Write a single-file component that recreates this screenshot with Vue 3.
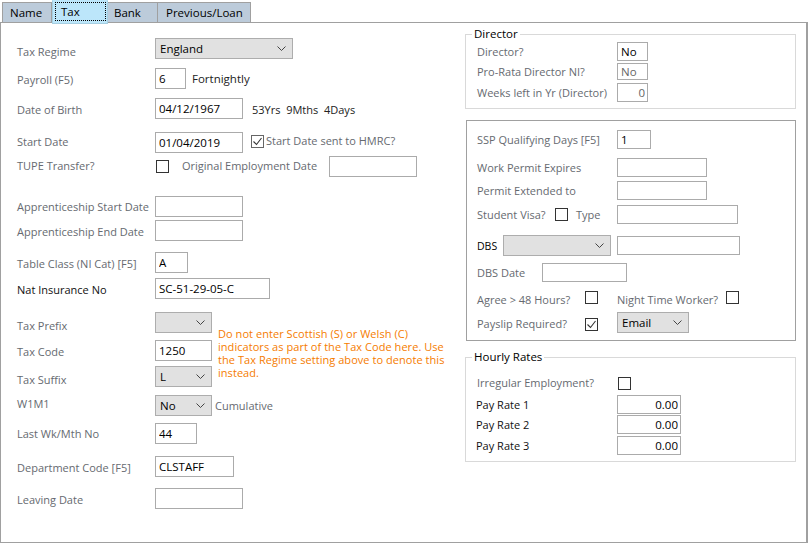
<script setup>
const tabs = [
  { name: 'Name', active: false },
  { name: 'Tax', active: true },
  { name: 'Bank', active: false },
  { name: 'Previous/Loan', active: false }
]
</script>

<template>
  <div class="screen">
    <div class="tabs">
      <div v-for="t in tabs" :key="t.name" class="tab" :class="[{ active: t.active }, 'tab-' + t.name.slice(0, 3)]">
        <span class="tab-text">{{ t.name }}</span>
      </div>
    </div>
    <div class="panel">
      <div class="left">
        <div class="row"><span class="lab low">Tax Regime</span>
          <div class="sel w138">England<svg class="chev" width="9" height="5" viewBox="0 0 9 5"><path d="M.5.5l4 4 4-4" /></svg></div>
        </div>
        <div class="row g9"><span class="lab mid">Payroll (F5)</span>
          <input class="w31" value="6" readonly /><span class="txt ml6">Fortnightly</span>
        </div>
        <div class="row g9"><span class="lab mid">Date of Birth</span>
          <input class="w88" value="04/12/1967" readonly /><span class="txt age">53Yrs&nbsp; 9Mths&nbsp; 4Days</span>
        </div>
        <div class="row g13"><span class="lab">Start Date</span>
          <input class="w88" value="01/04/2019" readonly />
          <span class="check on hmrc"><svg width="11" height="11" viewBox="0 0 11 11"><path d="M1.5 5.5l3 3 5-6.5" /></svg></span>
          <span class="lab2 hmrc-text">Start Date sent to HMRC?</span>
        </div>
        <div class="row g3"><span class="lab">TUPE Transfer?</span>
          <span class="check ml1"></span>
          <span class="lab2 orig">Original Employment Date</span>
          <input class="w88" readonly />
        </div>
        <div class="row g19"><span class="lab flat">Apprenticeship Start Date</span><input class="w88" readonly /></div>
        <div class="row g3"><span class="lab mid">Apprenticeship End Date</span><input class="w88" readonly /></div>
        <div class="row g11"><span class="lab mid">Table Class (NI Cat) [F5]</span><input class="w33" value="A" readonly /></div>
        <div class="row g5"><span class="lab mid dark">Nat Insurance No</span><input class="w115" value="SC-51-29-05-C" readonly /></div>

        <div class="tax-group g13">
          <div class="tax-rows">
            <div class="row"><span class="lab low">Tax Prefix</span>
              <div class="sel w57"><svg class="chev" width="9" height="5" viewBox="0 0 9 5"><path d="M.5.5l4 4 4-4" /></svg></div>
            </div>
            <div class="row g7"><span class="lab mid">Tax Code</span><input class="w57" value="1250" readonly /></div>
            <div class="row g5"><span class="lab low">Tax Suffix</span>
              <div class="sel w57">L<svg class="chev" width="9" height="5" viewBox="0 0 9 5"><path d="M.5.5l4 4 4-4" /></svg></div>
            </div>
          </div>
          <p class="note">Do not enter Scottish (S) or Welsh (C) indicators as part of the Tax Code here. Use the Tax Regime setting above to denote this instead.</p>
        </div>

        <div class="row g8"><span class="lab high">W1M1</span>
          <div class="sel w57">No<svg class="chev" width="9" height="5" viewBox="0 0 9 5"><path d="M.5.5l4 4 4-4" /></svg></div>
          <span class="lab2 ml3">Cumulative</span>
        </div>
        <div class="row g7"><span class="lab flat">Last Wk/Mth No</span><input class="w42" value="44" readonly /></div>
        <div class="row g12"><span class="lab mid">Department Code [F5]</span><input class="w79" value="CLSTAFF" readonly /></div>
        <div class="row g11"><span class="lab mid">Leaving Date</span><input class="w88" readonly /></div>
      </div>

      <div class="right">
        <fieldset class="group">
          <legend>Director</legend>
          <div class="row small"><span class="rlab">Director?</span><input class="w31" value="No" readonly /></div>
          <div class="row short g2"><span class="rlab">Pro-Rata Director NI?</span><input class="w31 muted" value="No" readonly /></div>
          <div class="row small g3"><span class="rlab">Weeks left in Yr (Director)</span><input class="w31 num muted" value="0" readonly /></div>
        </fieldset>

        <div class="box">
          <div class="row small"><span class="rlab">SSP Qualifying Days [F5]</span><input class="w34" value="1" readonly /></div>
          <div class="row small g9"><span class="rlab">Work Permit Expires</span><input class="w90" readonly /></div>
          <div class="row small g4"><span class="rlab">Permit Extended to</span><input class="w90" readonly /></div>
          <div class="row small g5">
            <span class="rlab visa">Student Visa?</span><span class="check"></span>
            <span class="lab2 type">Type</span><input class="w121" readonly />
          </div>
          <div class="row g11">
            <span class="dbs">DBS</span>
            <div class="sel w108"><svg class="chev" width="9" height="5" viewBox="0 0 9 5"><path d="M.5.5l4 4 4-4" /></svg></div>
            <input class="w123 ml6 small-h" readonly />
          </div>
          <div class="row small g7"><span class="rlab dbsdate">DBS Date</span><input class="w85" readonly /></div>
          <div class="row tick g7">
            <span class="rlab wide drop">Agree &gt; 48 Hours?</span><span class="check"></span>
            <span class="lab2 night drop">Night Time Worker?</span><span class="check"></span>
          </div>
          <div class="row g7">
            <span class="rlab wide payslip">Payslip Required?</span>
            <span class="check on payslip-check"><svg width="11" height="11" viewBox="0 0 11 11"><path d="M1.5 5.5l3 3 5-6.5" /></svg></span>
            <div class="sel w72 email">Email<svg class="chev" width="9" height="5" viewBox="0 0 9 5"><path d="M.5.5l4 4 4-4" /></svg></div>
          </div>
        </div>

        <fieldset class="group hourly">
          <legend>Hourly Rates</legend>
          <div class="row tick"><span class="rlab irregular">Irregular Employment?</span><span class="check ml1"></span></div>
          <div class="row small g4"><span class="rlab dark">Pay Rate 1</span><input class="w64 num" value="0.00" readonly /></div>
          <div class="row small g1"><span class="rlab dark">Pay Rate 2</span><input class="w64 num" value="0.00" readonly /></div>
          <div class="row small g2"><span class="rlab dark">Pay Rate 3</span><input class="w64 num" value="0.00" readonly /></div>
        </fieldset>
      </div>
    </div>
  </div>
</template>

<style>
html, body { margin: 0; background: #fff; }
</style>

<style scoped>
.screen {
  width: 808px;
  height: 543px;
  overflow: hidden;
  background: #fff;
  font-family: "Open Sans", "Noto Sans", sans-serif;
  font-size: 11px;
  color: #000;
  display: flex;
  flex-direction: column;
}
.tabs {
  display: flex;
  height: 22px;
  padding-left: 2px;
  align-items: flex-end;
}
.tab {
  height: 20px;
  box-sizing: border-box;
  background: #bccbda;
  border: 1px solid #a0a0a0;
  border-bottom: 0;
  border-left: 0;
  padding-left: 7px;
  line-height: 19px;
  font-size: 11.5px;
}
.tab:first-child { border-left: 1px solid #a0a0a0; }
.tab-Nam { width: 50px; }
.tab-Tax { width: 56px; }
.tab-Ban { width: 50px; padding-left: 6px; }
.tab-Pre { width: 93px; padding-left: 8px; }
.tab.active {
  height: 24px;
  margin-bottom: -2px;
  background: #bce6fa;
  border: 1px solid #a6cfe2;
  border-top-color: #bce6fa;
  border-bottom: 1px solid #a6cfe2;
  padding: 2px 2px 3px 3px;
  line-height: 17px;
  position: relative;
  z-index: 1;
}
.tab.active .tab-text {
  display: block;
  height: 17px;
  outline: 1px dotted #000;
  padding-left: 5px;
}
.panel {
  flex: 1;
  display: flex;
  background: #fff;
  border: 1px solid #a0a0a0;
  border-right-width: 2px;
  border-bottom-width: 1px;
}
.left {
  width: 448px;
  padding: 15px 0 0 16px;
}
.right {
  width: 331px;
  padding-top: 3px;
}
.row {
  display: flex;
  align-items: center;
  height: 21px;
}
.row.small { height: 19px; }
.row.short { height: 17px; }
.row.tick { height: 16px; }
.g1 { margin-top: 1px; }
.g2 { margin-top: 2px; }
.g3 { margin-top: 3px; }
.g4 { margin-top: 4px; }
.g5 { margin-top: 5px; }
.g7 { margin-top: 7px; }
.g8 { margin-top: 8px; }
.g9 { margin-top: 9px; }
.g11 { margin-top: 11px; }
.g12 { margin-top: 12px; }
.g13 { margin-top: 13px; }
.g19 { margin-top: 19px; }
.lab, .lab2, .rlab { color: #666a70; white-space: nowrap; }
.lab { width: 138px; flex: none; padding-bottom: 2px; }
.lab.flat { padding: 0; }
.lab.low { padding: 5px 0 0; }
.lab.mid { padding: 1px 0 0; }
.lab.high { padding-bottom: 4px; }
.lab.dark { color: #111; }
.rlab { width: 140px; flex: none; }
.rlab.dark { color: #111; margin-left: -1px; padding-right: 1px; }
.irregular { padding-bottom: 1px; }
.txt { color: #222; white-space: nowrap; }
.ml6 { margin-left: 6px; }
.ml1 { margin-left: 1px; }
.ml3 { margin-left: 3px; }
.age { margin-left: 9px; padding-top: 2px; font-size: 11px; }
.ml6.txt { font-size: 11.5px; padding-bottom: 1px; }
.orig { margin-left: 13px; width: 147px; flex: none; padding-bottom: 2px; }
input {
  box-sizing: border-box;
  height: 100%;
  margin: 0;
  padding: 0 3px;
  border: 1px solid #ababab;
  border-radius: 0;
  outline: 0;
  background: #fff;
  font: inherit;
  font-size: 11.5px;
  color: #000;
  flex: none;
}
input.muted { color: #666; }
input.num { text-align: right; padding-right: 2px; }
.w31 { width: 31px; }
.w33 { width: 33px; }
.w34 { width: 34px; }
.w42 { width: 42px; }
.w57 { width: 57px; }
.w64 { width: 64px; }
.w72 { width: 72px; }
.w79 { width: 79px; }
.w85 { width: 85px; }
.w88 { width: 88px; }
.w90 { width: 90px; }
.w108 { width: 108px; }
.w115 { width: 115px; }
.w121 { width: 121px; }
.w123 { width: 123px; }
.w138 { width: 138px; }
.sel {
  box-sizing: border-box;
  height: 21px;
  flex: none;
  display: flex;
  align-items: center;
  padding: 0 6px 0 4px;
  background: #e1e1e1;
  border: 1px solid #adadad;
  font-size: 11.5px;
}
.chev {
  flex: none;
  margin-left: auto;
  fill: none;
  stroke: #444;
  stroke-width: 1;
}
.check {
  box-sizing: border-box;
  width: 13px;
  height: 13px;
  flex: none;
  border: 1px solid #333;
  background: #fff;
  display: flex;
  align-items: center;
  justify-content: center;
}
.check svg { fill: none; stroke: #333; stroke-width: 1.1; }
.hmrc { margin: -3px 0 0 8px; border-color: #666; }
.hmrc-text { margin: 0 0 5px 2px; }
.tax-group { display: flex; }
.tax-rows { flex: none; }
.note {
  width: 230px;
  margin: 15px 0 0 6px;
  color: #f57c00;
  line-height: 13px;
  font-size: 11px;
  letter-spacing: 0.05px;
}
.group {
  margin: 0;
  padding: 0 10px 6px 11px;
  border: 1px solid #d9d9d9;
  min-width: 0;
}
.group legend {
  margin-left: -5px;
  padding: 0 2px;
  height: 16px;
  line-height: 16px;
  font-size: 11.5px;
  color: #000;
}
.box {
  margin: 11px 0 0 1px;
  padding: 9px 0 7px 10px;
  width: 318px;
  border: 1px solid #a0a0a0;
}
.rlab.visa { width: 78px; }
.rlab.wide { width: 108px; }
.rlab.dbsdate { width: 65px; }
.drop { padding-top: 4px; }
.payslip { padding-top: 2px; }
.payslip-check { margin-top: 3px; }
.type { width: 41px; margin-left: 8px; flex: none; }
.dbs { width: 26px; font-size: 10.5px; flex: none; }
.small-h { height: 19px; }
.night { margin-left: 19px; width: 109px; flex: none; }
.email { margin-left: 19px; }
.hourly { margin-top: 8px; padding-top: 10px; padding-bottom: 6px; }
</style>
